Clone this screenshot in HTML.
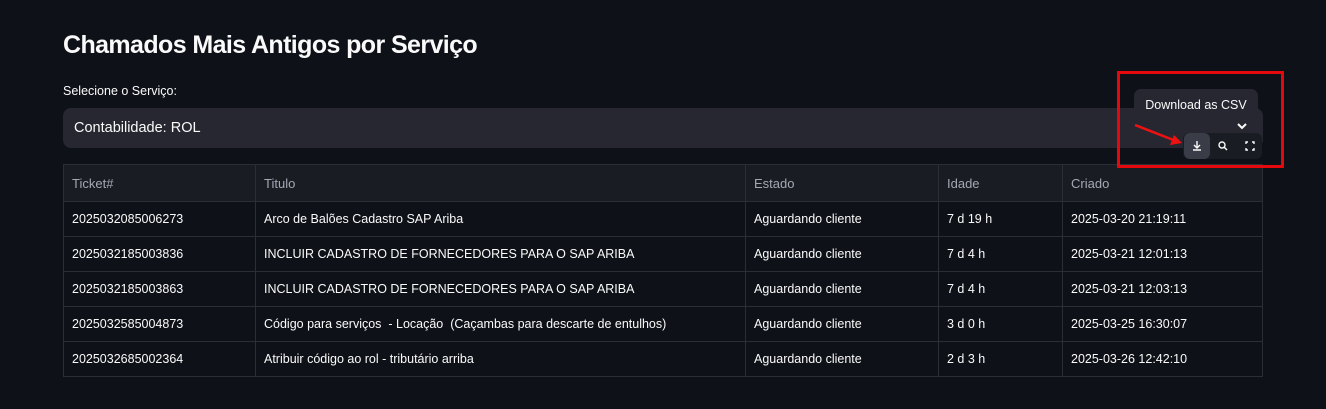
<!DOCTYPE html><html><head><style>
body{margin:0;background:#0e1117;width:1326px;height:409px;overflow:hidden;font-family:"Liberation Sans",sans-serif;color:#fafafa;position:relative}
.a{position:absolute}
h1{position:absolute;left:63px;top:31px;margin:0;font-size:25px;font-weight:bold;letter-spacing:-0.6px}
table{position:absolute;left:63px;top:164px;width:1200px;border-collapse:collapse;font-size:12.5px;background:#0e1117}
td,th{border:1px solid #2b2e37;height:34px;padding:0 0 0 8px;text-align:left;font-weight:normal;white-space:nowrap}
th{height:36px;color:#a3a8b4;background:#1a1c23;font-size:13px}
</style></head><body>
<h1>Chamados Mais Antigos por Serviço</h1>
<div class="a" style="left:63px;top:84px;font-size:12.5px">Selecione o Serviço:</div>
<div class="a" style="left:63px;top:108px;width:1200px;height:40px;background:#262730;border-radius:8px"></div>
<div class="a" style="left:74px;top:120px;font-size:14.5px">Contabilidade: ROL</div>
<table>
<tr><th style="width:183px">Ticket#</th><th style="width:481px">Titulo</th><th style="width:184px">Estado</th><th style="width:115px">Idade</th><th>Criado</th></tr>
<tr><td>2025032085006273</td><td>Arco de Balões Cadastro SAP Ariba</td><td>Aguardando cliente</td><td>7 d 19 h</td><td>2025-03-20 21:19:11</td></tr>
<tr><td>2025032185003836</td><td>INCLUIR CADASTRO DE FORNECEDORES PARA O SAP ARIBA</td><td>Aguardando cliente</td><td>7 d 4 h</td><td>2025-03-21 12:01:13</td></tr>
<tr><td>2025032185003863</td><td>INCLUIR CADASTRO DE FORNECEDORES PARA O SAP ARIBA</td><td>Aguardando cliente</td><td>7 d 4 h</td><td>2025-03-21 12:03:13</td></tr>
<tr><td>2025032585004873</td><td>Código para serviços &nbsp;- Locação &nbsp;(Caçambas para descarte de entulhos)</td><td>Aguardando cliente</td><td>3 d 0 h</td><td>2025-03-25 16:30:07</td></tr>
<tr><td>2025032685002364</td><td>Atribuir código ao rol - tributário arriba</td><td>Aguardando cliente</td><td>2 d 3 h</td><td>2025-03-26 12:42:10</td></tr>
</table>
<div class="a" style="left:1134px;top:89px;width:124px;height:32px;background:#262730;border-radius:7px;font-size:12.5px;line-height:32px;text-align:center">Download as CSV</div>
<svg class="a" style="left:1236px;top:122px" width="12" height="10"><path d="M2 2l4 4 4-4" stroke="#fafafa" stroke-width="2" fill="none"/></svg>
<div class="a" style="left:1183px;top:133px;width:79px;height:26px;background:#1a1c23;border-radius:6px"></div>
<div class="a" style="left:1184px;top:133px;width:26px;height:26px;background:#3a3c47;border-radius:6px"></div>
<svg class="a" style="left:1184px;top:133px" width="79" height="26" fill="none" stroke="#fafafa" stroke-width="1.4">
<path d="M13 8v7M10 12l3 3 3-3M9 17h8"/>
<circle cx="38" cy="12" r="3"/><path d="M40 14l3 3"/>
<path d="M62 11V9h2M68 9h2v2M70 15v2h-2M64 17h-2v-2"/>
</svg>
<svg class="a" style="left:1130px;top:120px" width="60" height="30"><path d="M5 5L46 21" stroke="#ee1111" stroke-width="2.5"/><path d="M52 23L40 25L44 15Z" fill="#ee1111"/></svg>
<div class="a" style="left:1117px;top:71px;width:161px;height:91px;border:3px solid #e5080c"></div>
</body></html>
